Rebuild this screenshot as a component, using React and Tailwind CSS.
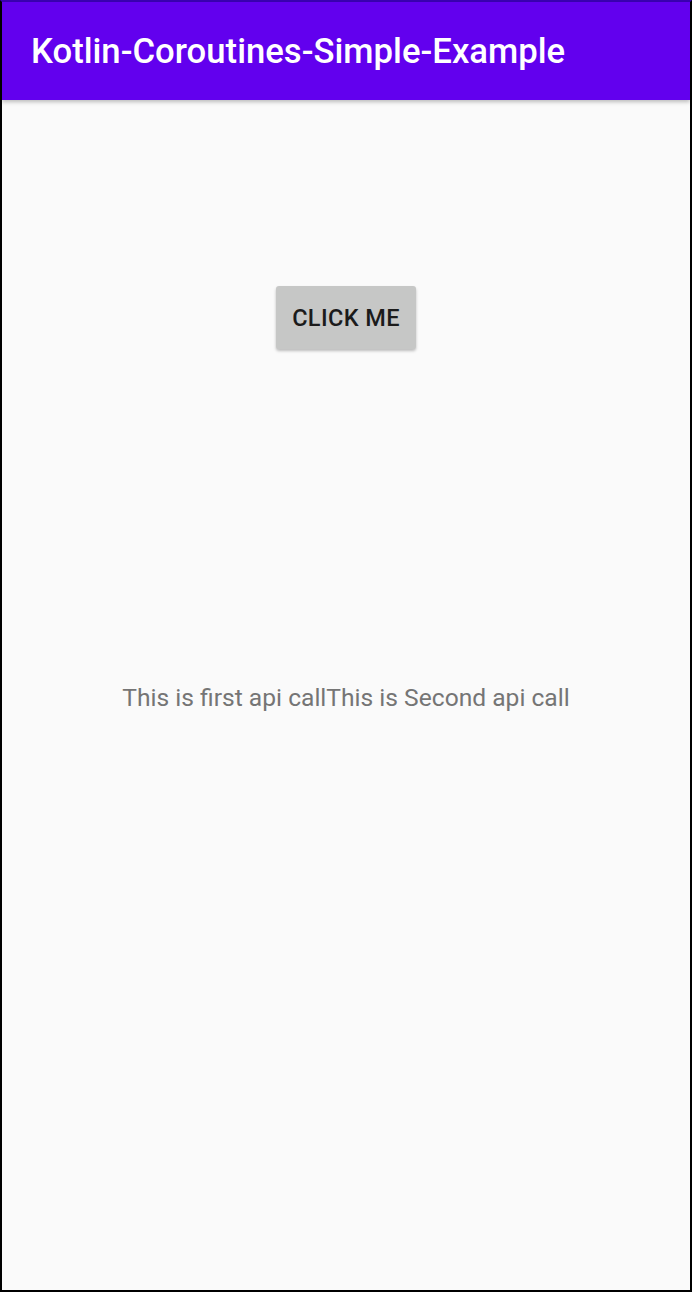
export default function App() {
  return (
    <div className="h-[1292px] w-[692px] border-2 border-black border-t-[#3a00b3] bg-[#fafafa] flex flex-col font-['Roboto','Liberation_Sans',sans-serif]">
      <header className="h-[98px] bg-[#6200ee] flex items-center pl-[29px] shadow-[0_2px_4px_rgba(0,0,0,0.25)] relative">
        <h1 className="text-white text-[34.7px] font-medium leading-none">
          Kotlin-Coroutines-Simple-Example
        </h1>
      </header>

      <div className="flex justify-center mt-[186px]">
        <button className="w-[140px] h-[63px] pt-[3px] bg-[#c6c7c6] rounded-[3px] shadow-[0_2px_3px_rgba(0,0,0,0.25)] text-[#1b1b1b] text-[23.5px] font-medium tracking-[0.4px] leading-none">
          CLICK ME
        </button>
      </div>

      <div className="flex justify-center mt-[331px]">
        <p className="text-[#757575] text-[24.6px]">
          This is first api callThis is Second api call
        </p>
      </div>
    </div>
  );
}
